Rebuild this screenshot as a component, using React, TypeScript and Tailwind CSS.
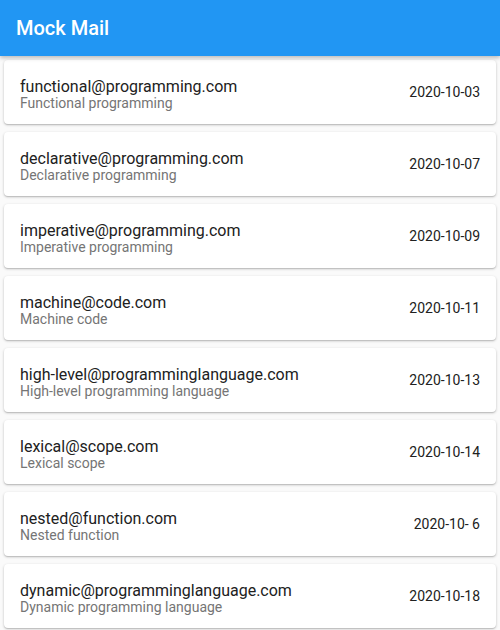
import React from "react";

const mails = [
  { email: "functional@programming.com", subject: "Functional programming", date: "2020-10-03" },
  { email: "declarative@programming.com", subject: "Declarative programming", date: "2020-10-07" },
  { email: "imperative@programming.com", subject: "Imperative programming", date: "2020-10-09" },
  { email: "machine@code.com", subject: "Machine code", date: "2020-10-11" },
  { email: "high-level@programminglanguage.com", subject: "High-level programming language", date: "2020-10-13" },
  { email: "lexical@scope.com", subject: "Lexical scope", date: "2020-10-14" },
  { email: "nested@function.com", subject: "Nested function", date: "2020-10- 6" },
  { email: "dynamic@programminglanguage.com", subject: "Dynamic programming language", date: "2020-10-18" },
];

export default function App() {
  return (
    <div className="h-[630px] w-[500px] overflow-hidden bg-[#fafafa] font-['Roboto',sans-serif]">
      <header className="relative z-10 flex h-14 items-center bg-[#2196f3] px-4 shadow-[0_2px_4px_rgba(0,0,0,0.25)]">
        <h1 className="text-[20px] font-medium text-white">Mock Mail</h1>
      </header>
      <div className="flex flex-col gap-2 p-1">
        {mails.map((mail) => (
          <div
            key={mail.email}
            className="flex h-16 items-center justify-between rounded bg-white px-4 shadow-[0_1px_3px_rgba(0,0,0,0.2),0_1px_1px_rgba(0,0,0,0.12)]"
          >
            <div className="flex flex-col pt-[6px]">
              <span className="text-[16px] leading-[16px] text-[#212121]">{mail.email}</span>
              <span className="text-[14px] leading-[16px] text-[#757575]">{mail.subject}</span>
            </div>
            <span className="text-[14px] text-[#212121]">{mail.date}</span>
          </div>
        ))}
      </div>
    </div>
  );
}
